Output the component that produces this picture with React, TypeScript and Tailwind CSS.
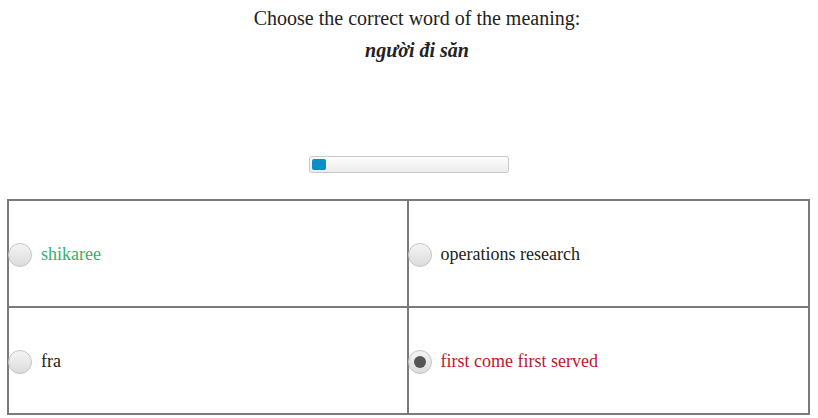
const OPTIONS = [
  { label: "shikaree", color: "text-[#2fb36b]", checked: false },
  { label: "operations research", color: "text-[#222]", checked: false },
  { label: "fra", color: "text-[#222]", checked: false },
  { label: "first come first served", color: "text-[#c0172b]", checked: true },
];

function Radio({ checked }: { checked: boolean }) {
  return (
    <span className="ml-[-1px] flex h-[24px] w-[24px] shrink-0 items-center justify-center rounded-full border border-[#c4c4c4] bg-gradient-to-b from-[#f4f4f4] to-[#dcdcdc]">
      {checked && <span className="h-[12px] w-[12px] rounded-full bg-[#555]" />}
    </span>
  );
}

export default function App() {
  return (
    <div className="w-[818px] h-[418px] bg-white font-[family-name:Liberation_Serif,serif] text-[#222]">
      <div className="pl-[16px] pt-[6px] text-center text-[20px] leading-[24px]">
        Choose the correct word of the meaning:
      </div>
      <div className="pl-[16px] mt-[8px] text-center text-[20px] leading-[24px] font-bold italic">
        người đi săn
      </div>

      <div className="mt-[94px] flex justify-center">
        <div className="h-[17px] w-[200px] rounded-[3px] border border-[#c8c8c8] bg-gradient-to-b from-[#fdfdfd] to-[#ececec] p-[2px]">
          <div className="h-[11px] w-[14px] rounded-[2px] bg-[#0a8fc4]" />
        </div>
      </div>

      <div className="ml-[7px] mt-[26px] grid w-[803px] grid-cols-2 border-2 border-[#7a7a7a]">
        {OPTIONS.map((o, i) => (
          <div
            key={o.label}
            className={`flex items-center gap-[9px] pt-[2px] ${i < 2 ? "h-[107px] border-b-2 border-[#7a7a7a]" : "h-[105px]"} ${i % 2 === 0 ? "border-r-2 border-[#7a7a7a]" : ""}`}
          >
            <Radio checked={o.checked} />
            <span className={`text-[18px] ${o.color}`}>{o.label}</span>
          </div>
        ))}
      </div>
    </div>
  );
}
